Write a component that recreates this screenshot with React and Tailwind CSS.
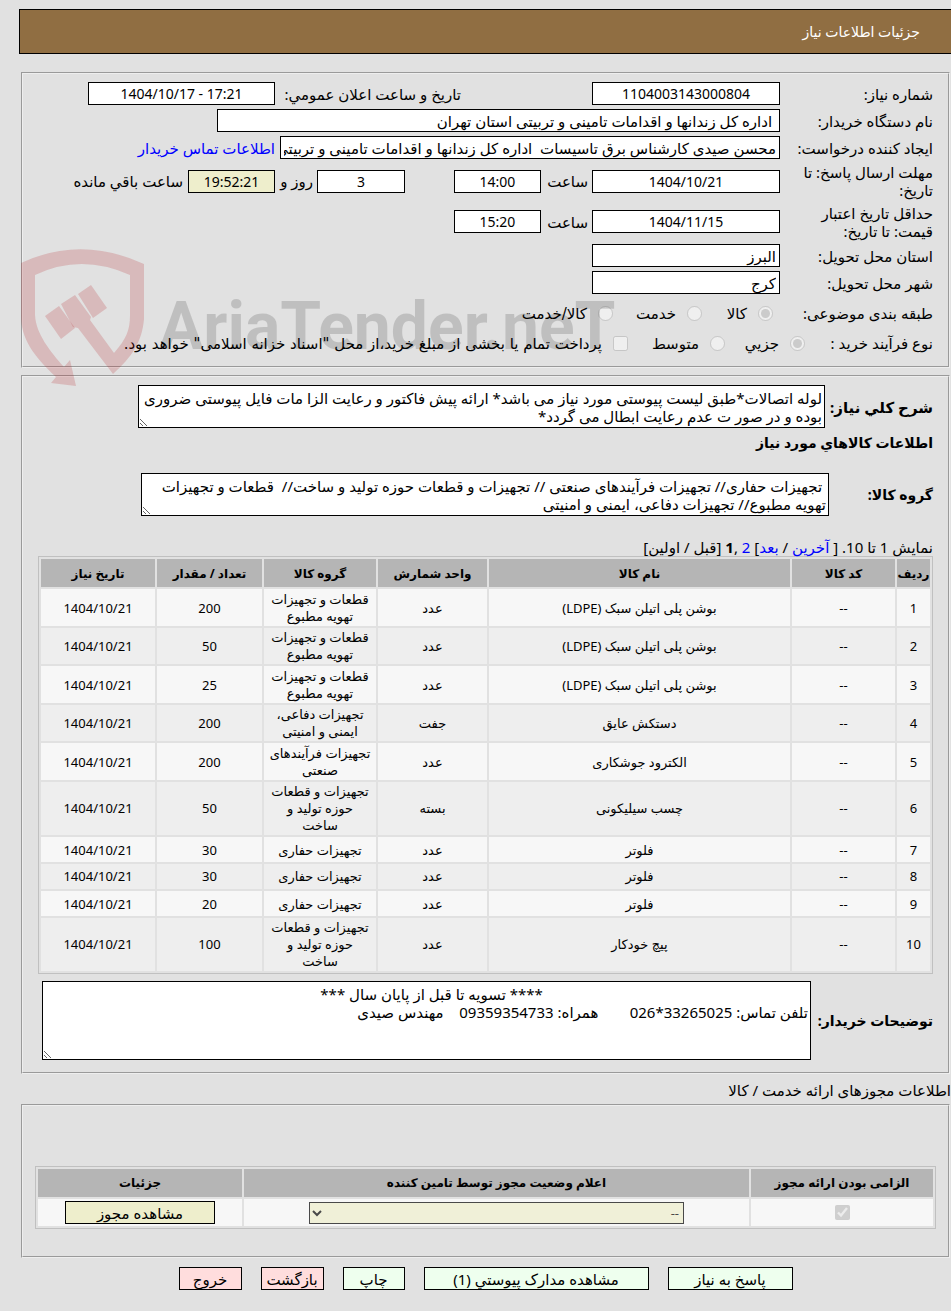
/**
 * Need Details Page
 * Shows a purchase need: buyer info, requested goods and required licences.
 */
import React from 'react';

const items = [
    { name: 'بوشن پلی اتیلن سبک (LDPE)', unit: 'عدد', group: 'قطعات و تجهیزات\nتهویه مطبوع', count: 200 },
    { name: 'بوشن پلی اتیلن سبک (LDPE)', unit: 'عدد', group: 'قطعات و تجهیزات\nتهویه مطبوع', count: 50 },
    { name: 'بوشن پلی اتیلن سبک (LDPE)', unit: 'عدد', group: 'قطعات و تجهیزات\nتهویه مطبوع', count: 25 },
    { name: 'دستکش عایق', unit: 'جفت', group: 'تجهیزات دفاعی،\nایمنی و امنیتی', count: 200 },
    { name: 'الکترود جوشکاری', unit: 'عدد', group: 'تجهیزات فرآیندهای\nصنعتی', count: 200 },
    { name: 'چسب سیلیکونی', unit: 'بسته', group: 'تجهیزات و قطعات\nحوزه تولید و\nساخت', count: 50 },
    { name: 'فلوتر', unit: 'عدد', group: 'تجهیزات حفاری', count: 30 },
    { name: 'فلوتر', unit: 'عدد', group: 'تجهیزات حفاری', count: 30 },
    { name: 'فلوتر', unit: 'عدد', group: 'تجهیزات حفاری', count: 20 },
    { name: 'پیچ خودکار', unit: 'عدد', group: 'تجهیزات و قطعات\nحوزه تولید و\nساخت', count: 100 },
];

const goodsText =
    'لوله اتصالات*طبق لیست پیوستی مورد نیاز می باشد* ارائه پیش فاکتور و رعایت الزا مات فایل پیوستی ضروری بوده و در صور ت عدم رعایت ابطال می گردد*';

const groupText =
    ' تجهیزات حفاری// تجهیزات فرآیندهای صنعتی // تجهیزات و قطعات حوزه تولید و ساخت//  قطعات و تجهیزات تهویه مطبوع// تجهیزات دفاعی، ایمنی و امنیتی';

const notesText =
    '                                                                    **** تسویه تا قبل از پایان سال ***\nتلفن تماس: 33265025*026        همراه: 09359354733    مهندس صیدی';

const Panel = ({ className, children }) => (
    <section className={`border-2 border-[#eee] [border-style:groove] ${className}`}>{children}</section>
);

const Box = ({ className = '', ...props }) => (
    <input readOnly className={`h-[23px] min-w-0 border border-black px-[3px] ${className}`} {...props} />
);

const Label = ({ className = 'w-[153px] shrink-0', ...props }) => <label className={className} {...props} />;

const Choice = ({ id, label, className = '', ...props }) => (
    <span className={`flex items-center gap-[11px] ${className}`}>
        <input id={id} disabled className="size-[15px]" {...props} />
        <label htmlFor={id} className="pt-[2px] font-['DejaVu_Sans',sans-serif]">{label}</label>
    </span>
);

// Shield with gavel, laid over the lower half of the first panel
const Watermark = () => (
    <div dir="ltr" className="pointer-events-none absolute -left-[2px] top-[175px] z-10 flex" aria-hidden="true">
        <svg width="124" height="138" viewBox="21 250 124 138" fill="#b32025" fillOpacity="0.2">
            <path d="M21 264Q81 236 144 265V320C142 343 132 358 113 375L78 329L73 328L61 305L75 296L91 318L90 321L114 354C126 340 130 332 130 316V276Q81 254 35 276V316C36 335 50 352 64 368L70 361L76 387L51 384L56 378C33 356 21 340 21 316Z" />
            <path d="M45 317L59 307L75 329L61 340Z" />
            <path d="M78 295L91 286L107 309L93 319Z" />
        </svg>
        <span className="ml-[14px] pt-[46px] font-[Roboto,sans-serif] text-[66px] leading-[64px] font-bold text-black/15">
            AriaTender.neT
        </span>
    </div>
);

const th = 'bg-[#b5b5b5] p-0 text-center text-[12px] font-bold';
const digits = 'bg-white text-center text-[14px]';

const App = () => {
    return (
        <div
            dir="rtl"
            className="min-h-screen overflow-x-hidden bg-[#e1e1e1] pt-[9px] pb-5 pl-[19px] font-['Noto_Sans','DejaVu_Sans',sans-serif] text-[15px] leading-[18px] text-black"
        >
            <header className="flex h-[45px] items-center border border-r-0 border-black bg-[#906e42] pr-[31px]">
                <h1 className="text-[14px] text-white">جزئیات اطلاعات نیاز</h1>
            </header>

            <main className="pt-[18px] pr-px pl-[2px]">
                <Panel className="relative flex flex-col gap-1 px-[15px] pt-2 pb-[12px]">
                    <div className="flex items-center">
                        <Label htmlFor="number">شماره نیاز:</Label>
                        <Box id="number" className={`w-[188px] ${digits}`} defaultValue="1104003143000804" />
                        <Label htmlFor="announce" className="mr-[131px] w-[186px] shrink-0">تاریخ و ساعت اعلان عمومي:</Label>
                        <Box id="announce" dir="ltr" className={`w-[187px] ${digits}`} defaultValue="1404/10/17 - 17:21" />
                    </div>
                    <div className="flex items-center">
                        <Label htmlFor="org">نام دستگاه خریدار:</Label>
                        <Box id="org" className="w-[563px] bg-white" defaultValue=" اداره کل زندانها و اقدامات تامینی و تربیتی استان تهران" />
                    </div>
                    <div className="flex items-center">
                        <Label htmlFor="creator">ایجاد کننده درخواست:</Label>
                        <Box id="creator" className="w-[500px] bg-white" defaultValue="محسن صیدی کارشناس برق تاسیسات  اداره کل زندانها و اقدامات تامینی و تربیتی استان تهران" />
                        <a href="#contact" className="mr-[5px] whitespace-nowrap text-[#0000ff]">اطلاعات تماس خریدار</a>
                    </div>
                    <div className="flex items-center">
                        <Label htmlFor="deadline" className="w-[153px] shrink-0 pl-3">مهلت ارسال پاسخ: تا تاریخ:</Label>
                        <Box id="deadline" className={`w-[188px] ${digits}`} defaultValue="1404/10/21" />
                        <Label htmlFor="deadline-time" className="w-[51px] pr-1">ساعت</Label>
                        <Box id="deadline-time" className={`w-[87px] ${digits}`} defaultValue="14:00" />
                        <Box id="days" className={`mr-[49px] w-[88px] ${digits}`} defaultValue="3" />
                        <Label htmlFor="days" className="w-[42px] pr-1">روز و</Label>
                        <Box id="remain" className="w-[87px] bg-[#eeeecc] text-center text-[14px]" defaultValue="19:52:21" />
                        <Label htmlFor="remain" className="pr-[5px] whitespace-nowrap">ساعت باقي مانده</Label>
                    </div>
                    <div className="flex h-[37px] items-center">
                        <Label htmlFor="valid" className="w-[153px] shrink-0 pl-6">حداقل تاریخ اعتبار قیمت: تا تاریخ:</Label>
                        <Box id="valid" className={`w-[188px] ${digits}`} defaultValue="1404/11/15" />
                        <Label htmlFor="valid-time" className="w-[51px] pr-1">ساعت</Label>
                        <Box id="valid-time" className={`w-[87px] ${digits}`} defaultValue="15:20" />
                    </div>
                    <div className="flex items-center">
                        <Label htmlFor="province">استان محل تحویل:</Label>
                        <Box id="province" className="w-[188px] bg-white" defaultValue="البرز" />
                    </div>
                    <div className="flex items-center">
                        <Label htmlFor="city">شهر محل تحویل:</Label>
                        <Box id="city" className="w-[188px] bg-white" defaultValue="کرج" />
                    </div>
                    <div className="mt-1 flex h-[22px] items-center">
                        <span className="w-[160px] shrink-0">طبقه بندی موضوعی:</span>
                        <Choice id="goods" type="radio" name="kind" label="کالا" defaultChecked className="w-[71px]" />
                        <Choice id="service" type="radio" name="kind" label="خدمت" className="w-[89px]" />
                        <Choice id="both" type="radio" name="kind" label="کالا/خدمت" />
                    </div>
                    <div className="mt-1 flex h-[22px] items-center">
                        <span className="w-[128px] shrink-0">نوع فرآیند خرید :</span>
                        <Choice id="minor" type="radio" name="process" label="جزیي" defaultChecked className="w-[80px]" />
                        <Choice id="medium" type="radio" name="process" label="متوسط" className="w-[97px]" />
                        <Choice
                            id="bonds"
                            type="checkbox"
                            label={'پرداخت تمام یا بخشی از مبلغ خرید،از محل "اسناد خزانه اسلامی" خواهد بود.'}
                            className="whitespace-nowrap"
                        />
                    </div>
                    <Watermark />
                </Panel>

                <Panel className="mt-[7px] px-[15px] pt-2 pb-[12px]">
                    <div className="flex items-center">
                        <label htmlFor="summary" className="w-[108px] shrink-0 font-bold">شرح کلي نیاز:</label>
                        <textarea id="summary" readOnly className="h-[43px] w-[687px] resize overflow-hidden border border-black bg-white px-[2px] py-[3px]" defaultValue={goodsText} />
                    </div>
                    <h2 className="mt-[6px] text-[14px] font-bold">اطلاعات کالاهاي مورد نیاز</h2>
                    <div className="mt-[21px] flex items-center">
                        <label htmlFor="group" className="w-[104px] shrink-0 text-[14px] font-bold">گروه کالا:</label>
                        <textarea id="group" readOnly className="h-[43px] w-[688px] resize overflow-hidden border border-black bg-white px-[2px] py-[3px]" defaultValue={groupText} />
                    </div>

                    <nav className="mt-[22px]">
                        نمایش 1 تا 10. [ <a href="#last" className="text-[#0000ff]">آخرین</a> / <a href="#next" className="text-[#0000ff]">بعد</a>]{' '}
                        <a href="#2" className="text-[#0000ff]">2</a> ,<b>1</b> [قبل / اولین]
                    </nav>
                    <table className="w-full table-fixed border-separate border-spacing-[2px] border border-[#c0c0c0] text-center text-[13px] leading-[17px]">
                        <colgroup>
                            <col className="w-[33px]" />
                            <col className="w-[103px]" />
                            <col />
                            <col className="w-[109px]" />
                            <col className="w-[112px]" />
                            <col className="w-[105px]" />
                            <col className="w-[114px]" />
                        </colgroup>
                        <thead>
                            <tr className="h-[28px]">
                                <th className={th}>ردیف</th>
                                <th className={th}>کد کالا</th>
                                <th className={th}>نام کالا</th>
                                <th className={th}>واحد شمارش</th>
                                <th className={th}>گروه کالا</th>
                                <th className={th}>تعداد / مقدار</th>
                                <th className={th}>تاریخ نیاز</th>
                            </tr>
                        </thead>
                        <tbody>
                            {items.map((item, i) => (
                                <tr key={i} className="h-[25px] odd:bg-[#f7f7f7] even:bg-[#eee] [&>td]:px-[2px] [&>td]:py-px odd:[&>td]:pt-[2px]">
                                    <td>{i + 1}</td>
                                    <td>--</td>
                                    <td>{item.name}</td>
                                    <td>{item.unit}</td>
                                    <td className="whitespace-pre-line">{item.group}</td>
                                    <td>{item.count}</td>
                                    <td>1404/10/21</td>
                                </tr>
                            ))}
                        </tbody>
                    </table>

                    <div className="mt-[7px] flex items-center">
                        <label htmlFor="notes" className="w-[122px] shrink-0 text-[14px] font-bold">توضیحات خریدار:</label>
                        <textarea id="notes" readOnly className="h-[79px] w-[769px] resize overflow-hidden border border-black bg-white px-[2px] py-[3px]" defaultValue={notesText} />
                    </div>
                </Panel>

                <h2 className="-mr-px pt-[7px] pb-[5px]">اطلاعات مجوزهای ارائه خدمت / کالا</h2>

                <Panel className="px-[12px] pt-[60px] pb-[27px]">
                    <table className="w-full table-fixed border-separate border-spacing-[2px] border border-[#c0c0c0] text-center">
                        <colgroup>
                            <col className="w-[182px]" />
                            <col />
                            <col className="w-[204px]" />
                        </colgroup>
                        <thead>
                            <tr className="h-[28px]">
                                <th className={th}>الزامی بودن ارائه مجوز</th>
                                <th className={th}>اعلام وضعیت مجوز توسط تامین کننده</th>
                                <th className={th}>جزئیات</th>
                            </tr>
                        </thead>
                        <tbody>
                            <tr className="h-[27px] bg-[#f7f7f7] [&>td]:p-0">
                                <td>
                                    <input type="checkbox" disabled defaultChecked aria-label="الزامی بودن ارائه مجوز" className="mx-auto block size-[15px]" />
                                </td>
                                <td>
                                    <select disabled aria-label="اعلام وضعیت مجوز" className="mx-auto block h-[22px] w-[375px] border border-black bg-[#eeeecc] text-[13px] leading-[17px] opacity-70">
                                        <option>--</option>
                                    </select>
                                </td>
                                <td>
                                    <button className="mx-auto block h-[23px] w-[150px] border border-black bg-[#eeeecc]">مشاهده مجوز</button>
                                </td>
                            </tr>
                        </tbody>
                    </table>
                </Panel>

                <div className="mt-[9px] flex justify-center gap-[19px] [&>button]:h-[23px] [&>button]:border [&>button]:border-black">
                    <button className="w-[125px] bg-[#eeffee]">پاسخ به نیاز</button>
                    <button className="w-[225px] bg-[#eeffee]">مشاهده مدارک پیوستي (1)</button>
                    <button className="w-[62px] bg-[#eeffee]">چاپ</button>
                    <button className="w-[63px] bg-[#ffdddd]">بازگشت</button>
                    <button className="w-[63px] bg-[#ffdddd]">خروج</button>
                </div>
            </main>
        </div>
    );
};

export default App;
